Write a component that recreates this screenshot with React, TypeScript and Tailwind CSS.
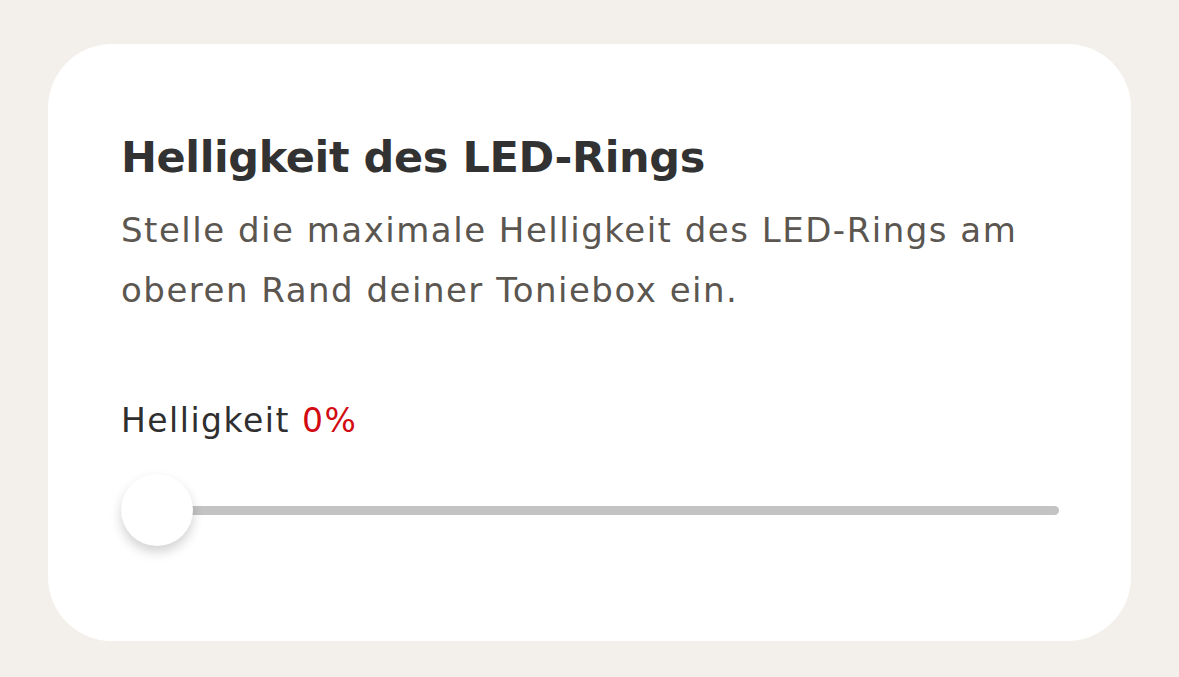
import React from "react";

export default function App() {
  return (
    <div
      className="w-[1179px] h-[677px] bg-[#f3f0eb] pt-[44px] pl-[48px]"
      style={{ fontFamily: "'DejaVu Sans', sans-serif" }}
    >
      <div className="w-[1083px] h-[597px] rounded-[64px] bg-white pl-[73px] pr-[73px] pt-[83px]">
        <h1 className="text-[43px] leading-[60px] font-bold tracking-[-0.4px] text-[#323232]">
          Helligkeit des LED-Rings
        </h1>
        <p className="mt-[13px] text-[34px] leading-[60px] tracking-[1.5px] text-[#5b5650] w-[937px]">
          Stelle die maximale Helligkeit des LED-Rings am oberen Rand deiner Toniebox ein.
        </p>
        <div className="mt-[81px] text-[33px] leading-[40px] tracking-[1.5px] text-[#2f2f2f]">
          Helligkeit <span className="text-[#d20a11]">0%</span>
        </div>
        <div className="mt-[32px] relative h-[74px] w-[938px] flex items-center">
          <div className="h-[9px] w-full rounded-full bg-[#c3c3c3]" />
          <div className="absolute left-0 top-px w-[72px] h-[72px] rounded-full bg-white shadow-[0_6px_12px_rgba(0,0,0,0.18)]" />
        </div>
      </div>
    </div>
  );
}
